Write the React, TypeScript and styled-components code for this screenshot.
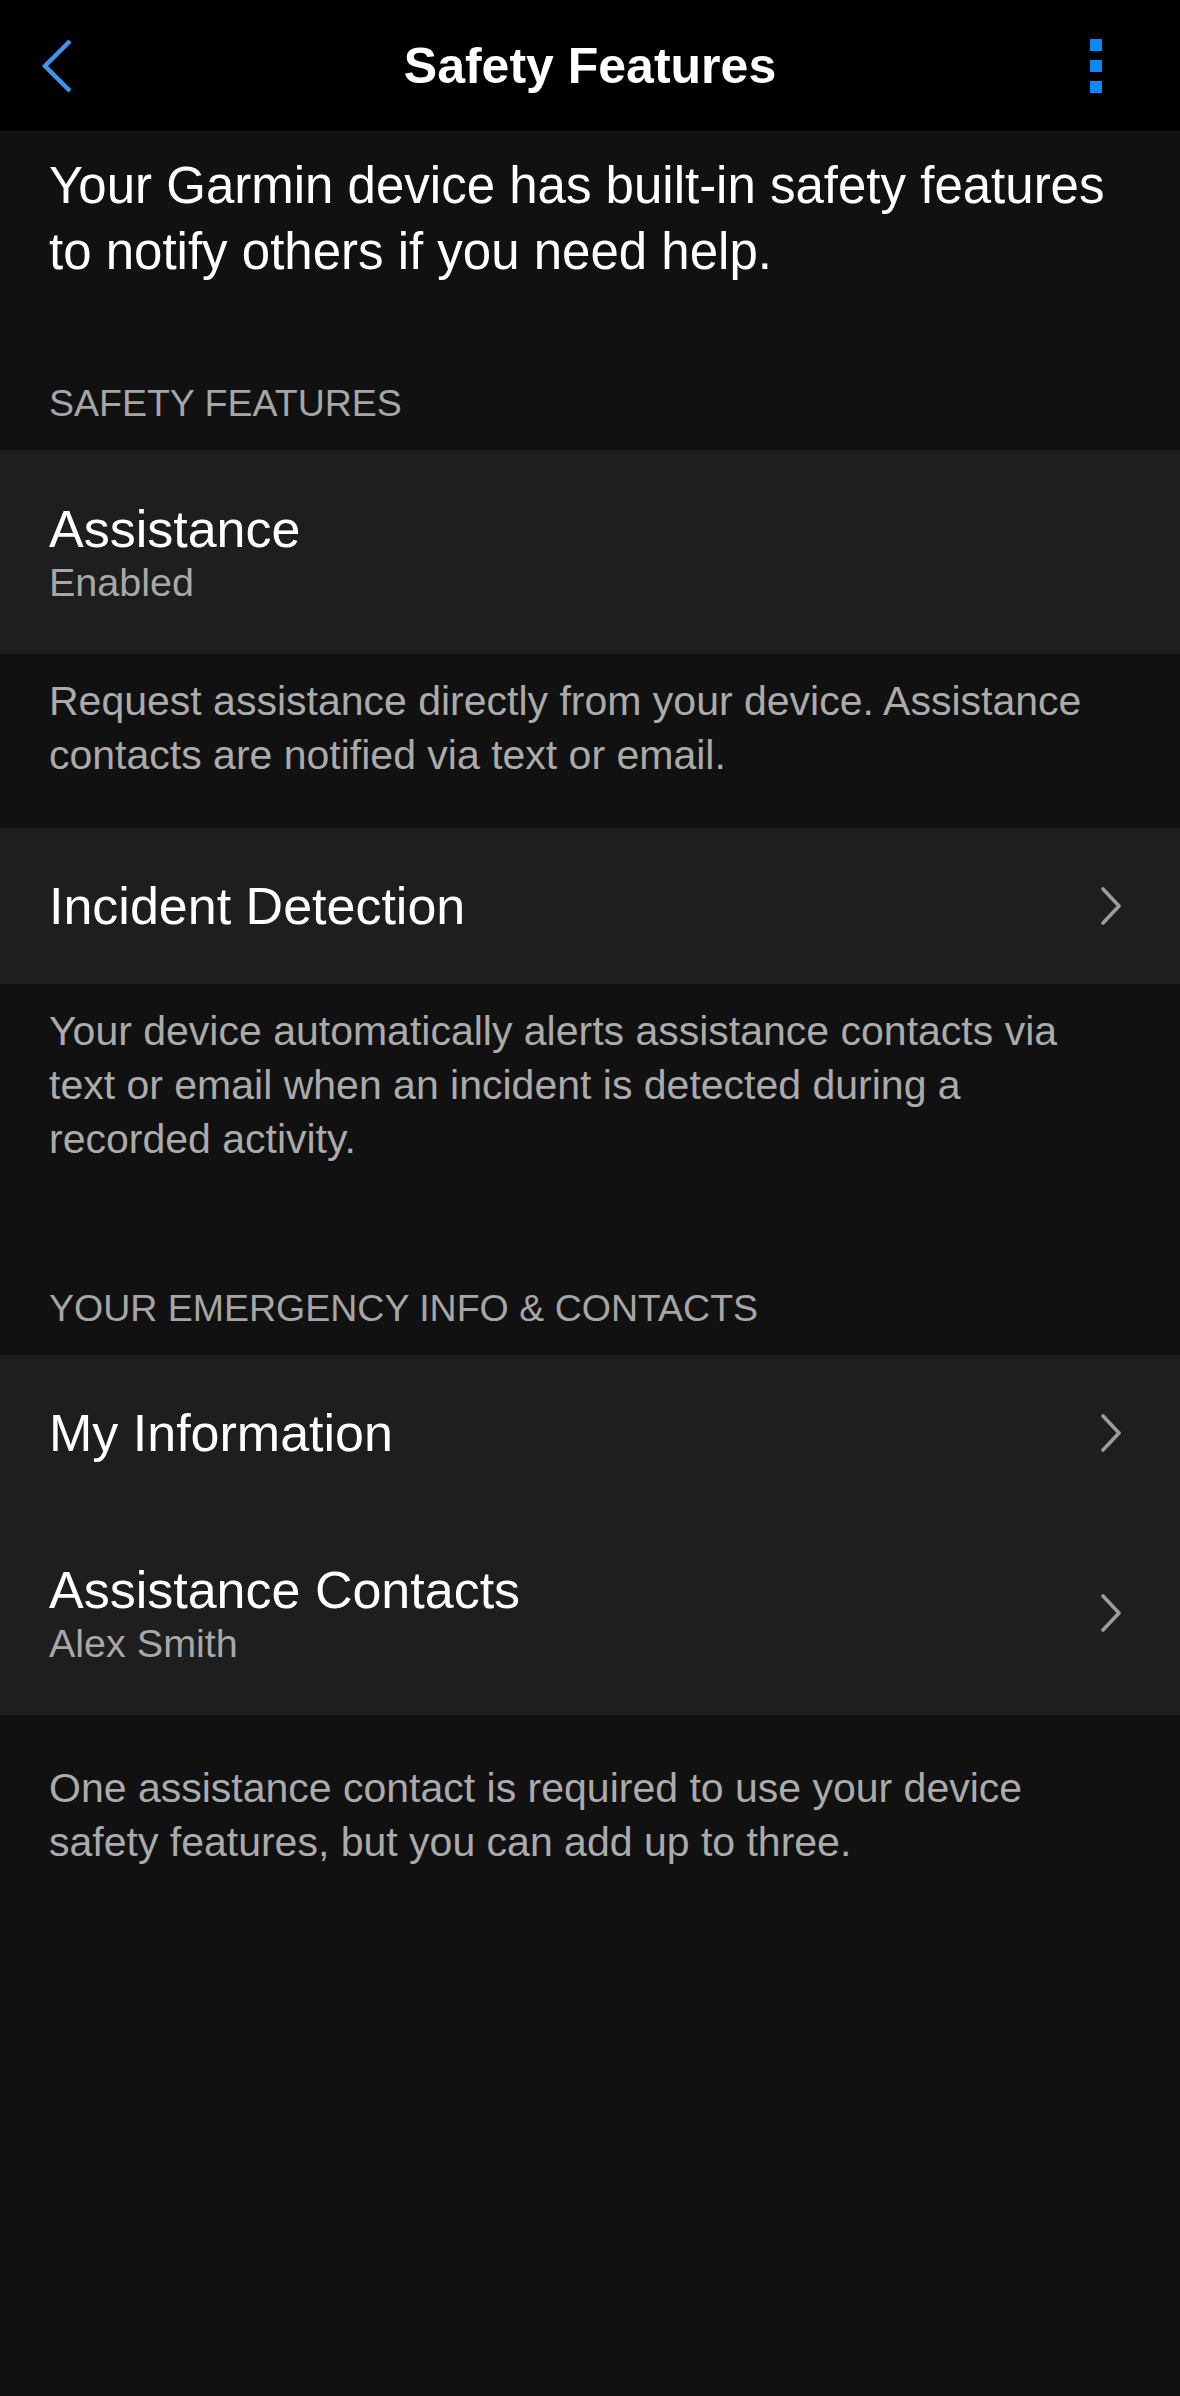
import React from "react";
import styled, { createGlobalStyle } from "styled-components";

const GlobalStyle = createGlobalStyle`
  html, body {
    margin: 0;
    padding: 0;
    background: #111111;
  }
  body {
    font-family: "Liberation Sans", Arial, sans-serif;
    -webkit-font-smoothing: antialiased;
  }
`;

const Page = styled.div`
  width: 1180px;
  min-height: 2396px;
  background: #111111;
  display: flex;
  flex-direction: column;
`;

const Header = styled.header`
  height: 131px;
  background: #000000;
  display: grid;
  grid-template-columns: 1fr auto 1fr;
  align-items: center;
`;

const BackButton = styled.button`
  justify-self: start;
  margin-left: 40px;
  padding: 0;
  border: 0;
  background: transparent;
  display: flex;
  align-items: center;
`;

const Title = styled.h1`
  margin: 0;
  color: #ffffff;
  font-size: 50px;
  font-weight: 700;
  letter-spacing: 0;
`;

const MenuButton = styled.button`
  justify-self: end;
  margin-right: 78px;
  padding: 0;
  border: 0;
  background: transparent;
  display: flex;
  flex-direction: column;
  gap: 9px;
`;

const Dot = styled.span`
  display: block;
  width: 12px;
  height: 12px;
  background: #0b8af5;
`;

const Intro = styled.p`
  margin: 0;
  padding: 22px 49px 22px 49px;
  color: #ffffff;
  font-size: 51px;
  line-height: 66px;
`;

const SectionHeader = styled.h2`
  margin: 0;
  padding: 74px 49px 24px;
  color: #a6a6a6;
  font-size: 37.5px;
  line-height: 45px;
  font-weight: 400;
  text-transform: uppercase;
`;

const Group = styled.div`
  background: #1e1e1e;
  display: flex;
  flex-direction: column;
`;

const Row = styled.div<{ $tall?: boolean }>`
  display: flex;
  align-items: center;
  padding: ${(p) => (p.$tall ? "49px" : "48px")} 58px ${(p) => (p.$tall ? "49px" : "48px")} 49px;
`;

const RowText = styled.div`
  flex: 1;
  display: flex;
  flex-direction: column;
`;

const RowTitle = styled.div`
  color: #ffffff;
  font-size: 52px;
  line-height: 60px;
`;

const RowSub = styled.div`
  color: #a8a8a8;
  font-size: 39.5px;
  line-height: 46px;
`;

const Description = styled.p<{ $top?: number }>`
  margin: 0;
  padding: ${(p) => p.$top ?? 20}px 80px 46px 49px;
  color: #ababab;
  font-size: 41px;
  line-height: 54px;
`;

const Chevron = () => (
  <svg width="22" height="38" viewBox="0 0 22 38" fill="none">
    <polyline
      points="3,2 19,19 3,36"
      stroke="#9c9c9c"
      strokeWidth="3.6"
      strokeLinecap="round"
      strokeLinejoin="round"
    />
  </svg>
);

const BackIcon = () => (
  <svg width="34" height="56" viewBox="0 0 34 56" fill="none">
    <polyline
      points="30,3 5,28 30,53"
      stroke="#3f94ec"
      strokeWidth="4.5"
      strokeLinecap="butt"
      strokeLinejoin="miter"
    />
  </svg>
);

export default function App() {
  return (
    <>
      <GlobalStyle />
      <Page>
        <Header>
          <BackButton aria-label="Back">
            <BackIcon />
          </BackButton>
          <Title>Safety Features</Title>
          <MenuButton aria-label="More">
            <Dot />
            <Dot />
            <Dot />
          </MenuButton>
        </Header>

        <Intro>
          Your Garmin device has built-in safety features to notify others if you need help.
        </Intro>

        <SectionHeader>Safety Features</SectionHeader>
        <Group>
          <Row $tall>
            <RowText>
              <RowTitle>Assistance</RowTitle>
              <RowSub>Enabled</RowSub>
            </RowText>
          </Row>
        </Group>
        <Description>
          Request assistance directly from your device. Assistance contacts are notified via text or email.
        </Description>
        <Group>
          <Row>
            <RowText>
              <RowTitle>Incident Detection</RowTitle>
            </RowText>
            <Chevron />
          </Row>
        </Group>
        <Description>
          Your device automatically alerts assistance contacts via text or email when an incident is detected during a recorded activity.
        </Description>

        <SectionHeader>Your Emergency Info &amp; Contacts</SectionHeader>
        <Group>
          <Row>
            <RowText>
              <RowTitle>My Information</RowTitle>
            </RowText>
            <Chevron />
          </Row>
          <Row $tall>
            <RowText>
              <RowTitle>Assistance Contacts</RowTitle>
              <RowSub>Alex Smith</RowSub>
            </RowText>
            <Chevron />
          </Row>
        </Group>
        <Description $top={46}>
          One assistance contact is required to use your device safety features, but you can add up to three.
        </Description>
      </Page>
    </>
  );
}
